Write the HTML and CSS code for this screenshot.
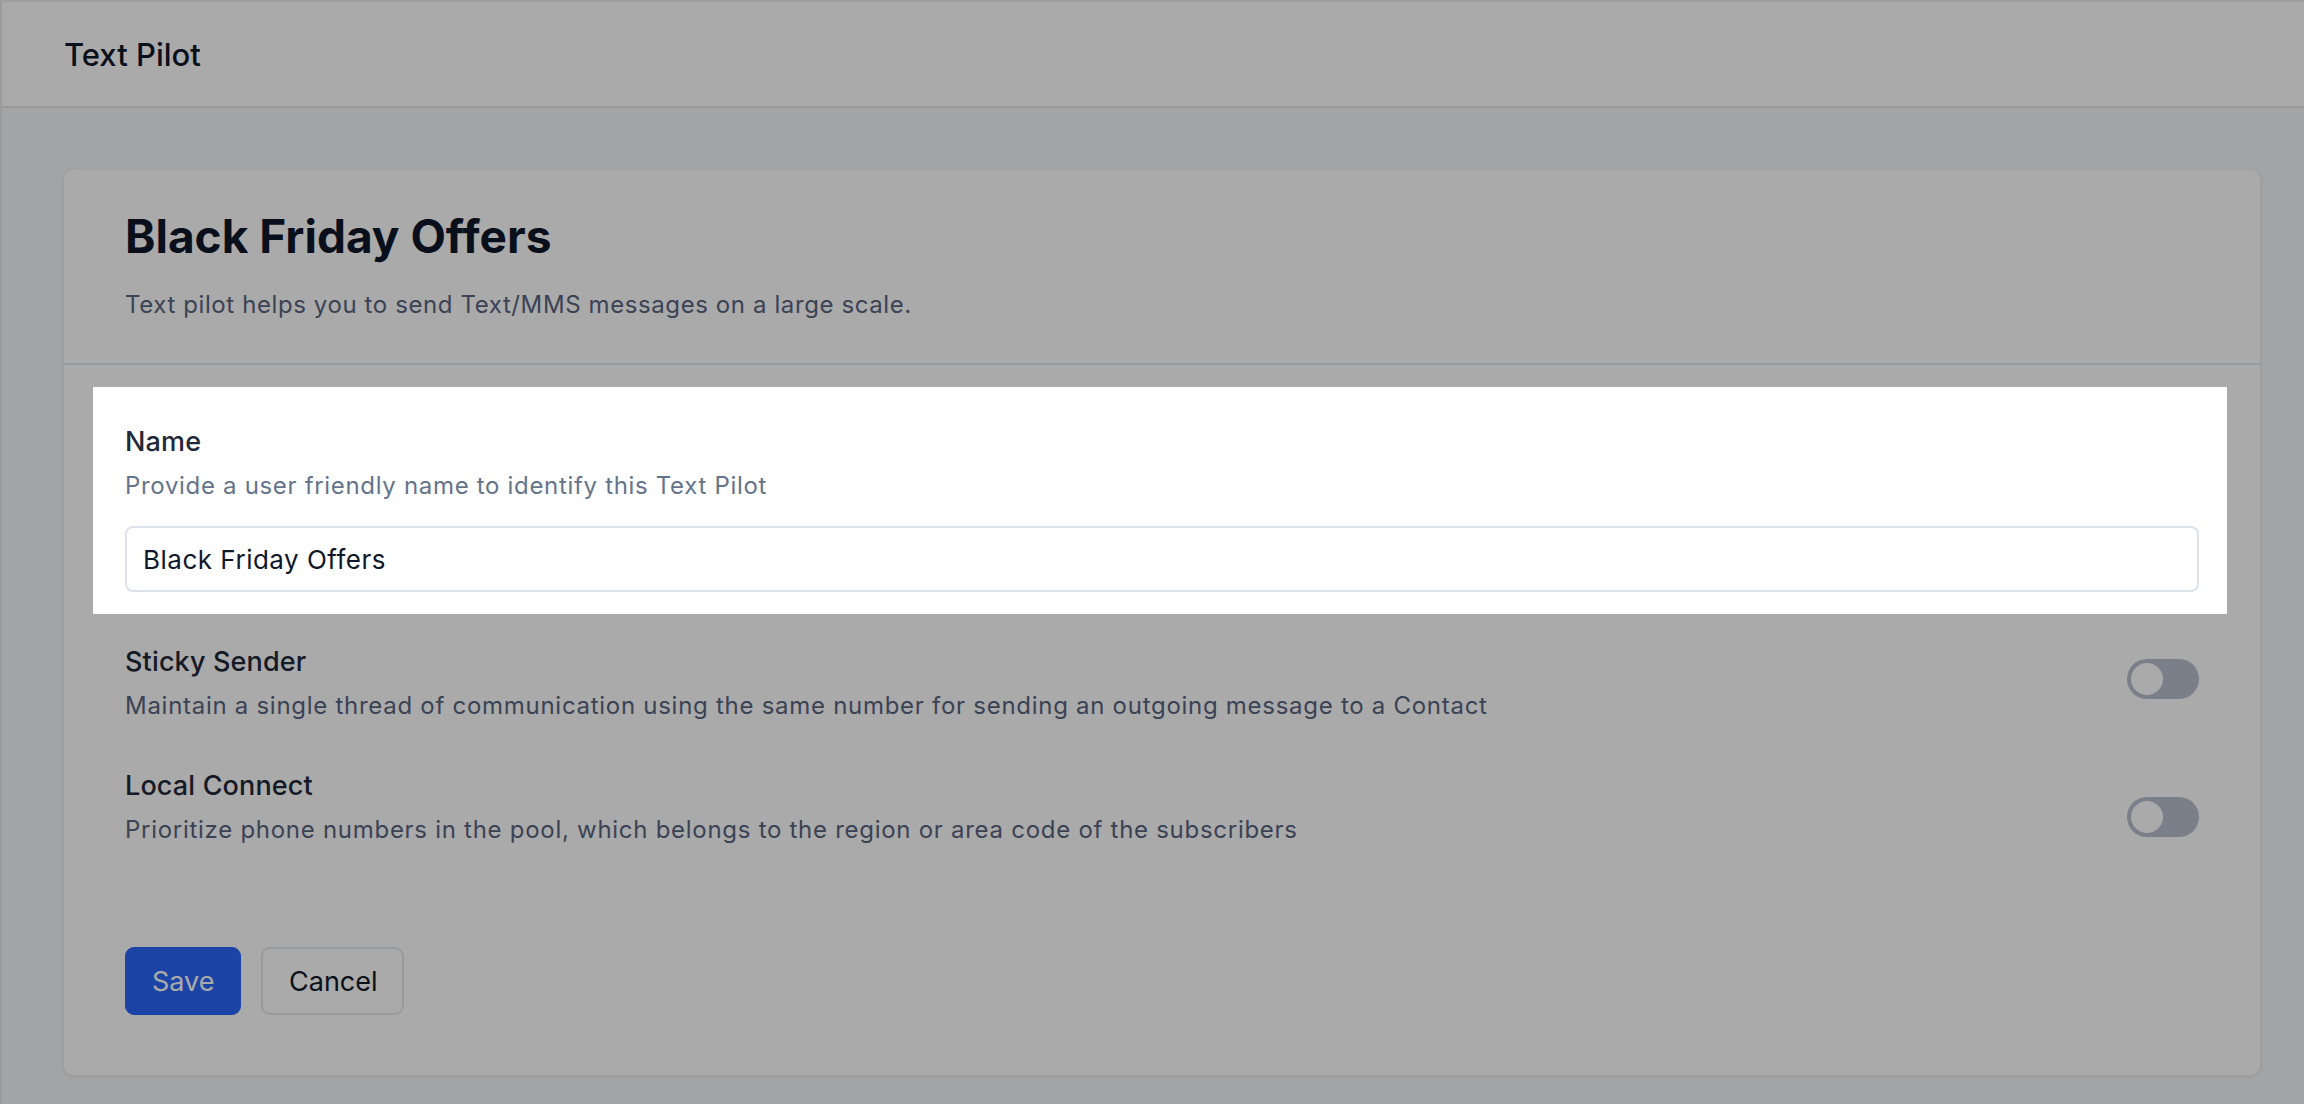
FILE: index.html
```html
<!DOCTYPE html>
<html lang="en">
<head>
    <meta charset="UTF-8">
    <meta name="viewport" content="width=device-width, initial-scale=1.0">
    <title>Text Pilot</title>
    <link rel="stylesheet" href="styles.css">
</head>
<body>

<div class="app">
    <header class="topbar">
        <span class="app-title">Text Pilot</span>
    </header>

    <main class="page">
        <section class="card">
            <div class="card-head">
                <h1>Black Friday Offers</h1>
                <p>Text pilot helps you to send Text/MMS messages on a large scale.</p>
            </div>

            <form class="card-body" id="pilotForm">
                <!-- highlighted step of the tour -->
                <div class="field spotlight">
                    <label class="field-label" for="pilotName">Name</label>
                    <p class="field-help">Provide a user friendly name to identify this Text Pilot</p>
                    <input type="text" class="text-input" id="pilotName" name="pilotName" value="Black Friday Offers">
                </div>

                <div class="switch-row">
                    <div class="switch-text">
                        <div class="field-label">Sticky Sender</div>
                        <p class="field-help">Maintain a single thread of communication using the same number for sending an outgoing message to a Contact</p>
                    </div>
                    <span class="switch switch-sticky"><span class="knob"></span></span>
                </div>

                <div class="switch-row second">
                    <div class="switch-text">
                        <div class="field-label">Local Connect</div>
                        <p class="field-help">Prioritize phone numbers in the pool, which belongs to the region or area code of the subscribers</p>
                    </div>
                    <span class="switch switch-local"><span class="knob"></span></span>
                </div>

                <div class="actions">
                    <button type="submit" class="btn btn-primary">Save</button>
                    <button type="button" class="btn btn-secondary">Cancel</button>
                </div>
            </form>
        </section>
    </main>
</div>

</body>
</html>
```

FILE: styles.css
```css
* {
    box-sizing: border-box;
}

body {
    margin: 0;
    font-family: Inter, "Noto Sans", Arial, sans-serif;
    color: #0f172a;
    background-color: #f5f6f9;
}

.app {
    min-height: 100vh;
    border-left: 2px solid #e8e9ed;
    border-top: 2px solid #eeeff2;
    background-color: #f5f6f9;
}

/* top bar */
.topbar {
    height: 106px;
    display: flex;
    align-items: center;
    padding: 0 62px;
    background: #fff;
    border-bottom: 2px solid #e8e8ec;
}

.app-title {
    font-size: 31px;
    font-weight: 500;
    color: #0f172a;
}

.page {
    padding: 62px 44px 28px 62px;
}

/* card */
.card {
    background: #fff;
    border-radius: 9px;
    box-shadow: 0 1px 4px rgba(0, 0, 0, 0.1);
}

.card-head {
    padding: 40px 61px 40px;
    border-bottom: 2px solid #e8e9ee;
}

.card-head h1 {
    margin: 0;
    font-size: 46px;
    line-height: 53px;
    font-weight: 700;
    color: #0f172a;
}

.card-head p {
    margin: 24px 0 0;
    font-size: 24px;
    line-height: 36px;
    letter-spacing: 0.6px;
    color: #586580;
}

.card-body {
    padding: 22px 61px 60px;
}

.field-label {
    display: block;
    font-size: 27px;
    line-height: 40px;
    font-weight: 500;
    letter-spacing: 0.15px;
    color: #1e293b;
}

.field-help {
    margin: 6px 0 0;
    font-size: 24px;
    line-height: 36px;
    letter-spacing: 0.68px;
    color: #586580;
}

/* the field picked out by the tour: everything else sits under the shade */
.spotlight {
    position: relative;
    z-index: 10;
    margin: 0 -28px 0 -32px;
    padding: 35px 28px 22px 32px;
    background: #fff;
    box-shadow: 0 0 0 4000px rgba(0, 0, 0, 0.333);
}

.spotlight .field-help {
    color: #64748b;
}

.text-input {
    display: block;
    width: 100%;
    height: 66px;
    margin-top: 22px;
    padding: 0 16px;
    border: 2px solid #dde3ea;
    border-radius: 8px;
    font-family: inherit;
    font-size: 26px;
    letter-spacing: 0.5px;
    color: #0f172a;
    background: #fff;
    outline: none;
}

/* toggles */
.switch-row {
    display: flex;
    justify-content: space-between;
    align-items: flex-start;
    margin-top: 28px;
}

.switch-row.second {
    margin-top: 42px;
}

.switch-text .field-help {
    letter-spacing: 0.72px;
}

.switch {
    flex-shrink: 0;
    width: 72px;
    height: 40px;
    border-radius: 20px;
    background: #b8bfcf;
    padding: 4px;
}

.switch-sticky {
    margin-top: 17px;
}

.switch-local {
    margin-top: 31px;
}

.knob {
    display: block;
    width: 32px;
    height: 32px;
    border-radius: 50%;
    background: #fff;
}

/* buttons */
.actions {
    display: flex;
    gap: 20px;
    margin-top: 99px;
}

.btn {
    height: 68px;
    padding: 0 26px;
    border-radius: 9px;
    font-family: inherit;
    font-size: 27px;
    cursor: pointer;
}

.btn-primary {
    background: #2b66f9;
    color: #fff;
    border: 1px solid #2b66f9;
    width: 116px;
}

.btn-secondary {
    background: #fff;
    color: #0f172a;
    border: 2px solid #e5e7eb;
    width: 143px;
}
```
